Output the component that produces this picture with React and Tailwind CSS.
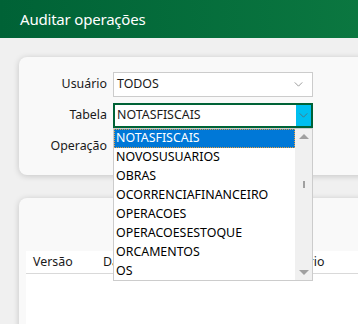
import { useState } from "react"

const tabelas = [
  "NOTASFISCAIS",
  "NOVOSUSUARIOS",
  "OBRAS",
  "OCORRENCIAFINANCEIRO",
  "OPERACOES",
  "OPERACOESESTOQUE",
  "ORCAMENTOS",
  "OS",
]

const Chevron = ({ className }) => (
  <svg viewBox="0 0 10 6" className={className} fill="none" stroke="currentColor" strokeWidth="1">
    <path d="M0.5 0.5 L5 5 L9.5 0.5" />
  </svg>
)

const App = () => {
  const [tabela, setTabela] = useState("NOTASFISCAIS")

  return (
    <div className="relative w-[358px] h-[324px] overflow-hidden bg-[#f0f0f0] font-['Noto_Sans','Open_Sans',sans-serif] text-[12.4px] text-[#1a1a1a]">
      <header className="h-[38px] flex items-center px-[20px] bg-gradient-to-r from-[#006236] to-[#0b7740]">
        <h1 className="text-[15px] text-white tracking-[-0.2px]">Auditar operações</h1>
      </header>

      <div className="pl-[19px] pt-[19px]">
        <section className="w-[360px] h-[118px] rounded-lg bg-[#f9f9f9] shadow-[0_1px_6px_rgba(0,0,0,0.18)] pt-[15px]">
          <div className="grid grid-cols-[88px_200px] gap-x-[6px] gap-y-[6px] items-center">
            <label className="text-right">Usuário</label>
            <div className="h-[25px] flex items-center justify-between border border-[#cccccc] bg-white pl-[3px] pr-[9px]">
              <span>TODOS</span>
              <Chevron className="w-[9px] h-[5px] text-[#888]" />
            </div>

            <label className="text-right">Tabela</label>
            <div className="relative h-[25px] flex items-center justify-between border-2 border-[#006236] bg-white pl-[2px]">
              <span>{tabela}</span>
              <div className="w-[15px] h-full flex items-center justify-center bg-[#00bfef]">
                <Chevron className="w-[9px] h-[5px] text-[#5a6a70]" />
              </div>

              <div className="absolute left-[-2px] top-[23px] z-10 w-[200px] h-[153px] flex border border-[#cccccc] bg-white">
                <ul className="flex-1">
                  {tabelas.map((t) => (
                    <li
                      key={t}
                      onClick={() => setTabela(t)}
                      className={
                        t === tabela
                          ? "h-[19px] flex items-center pl-[2px] bg-[#0078d7] text-white outline-1 outline-dotted outline-[#e8a040] -outline-offset-1"
                          : "h-[19px] flex items-center pl-[2px] text-black"
                      }
                    >
                      {t}
                    </li>
                  ))}
                </ul>
                <div className="w-[17px] flex flex-col items-center justify-between bg-[#f0f0f0] py-[5px]">
                  <div className="w-0 h-0 border-x-[5px] border-x-transparent border-b-[5px] border-b-[#a0a0a0]" />
                  <div className="w-[2px] h-[7px] bg-[#a0a0a0] mb-[40px]" />
                  <div className="w-0 h-0 border-x-[5px] border-x-transparent border-t-[5px] border-t-[#a0a0a0]" />
                </div>
              </div>
            </div>

            <label className="text-right">Operação</label>
            <div className="h-[25px] border border-[#cccccc] bg-white" />
          </div>
        </section>

        <section className="mt-[23px] w-[360px] h-[140px] rounded-lg bg-[#f9f9f9] shadow-[0_1px_6px_rgba(0,0,0,0.18)] pt-[53px] pl-[7px]">
          <div className="bg-white h-full">
            <div className="h-[23px] flex items-center border-b border-[#d9d9d9] pl-[7px]">
              <span className="w-[70px]">Versão</span>
              <span className="w-[176px]">Data</span>
              <span>Usuário</span>
            </div>
          </div>
        </section>
      </div>
    </div>
  )
}

export default App
